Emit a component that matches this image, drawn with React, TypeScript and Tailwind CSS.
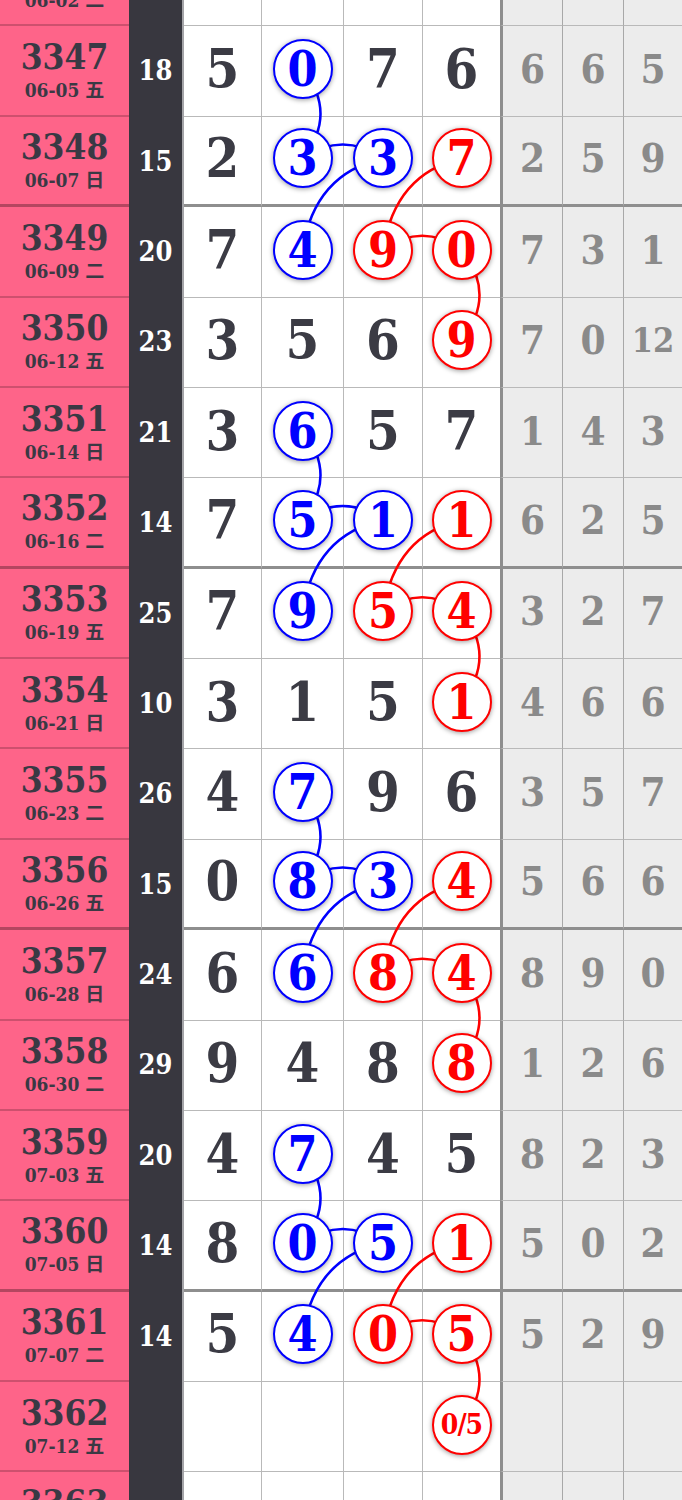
import React from "react";

const ROW_H = 90.375;

type Mark = "b" | "r" | null;

type Row = {
  no: string;
  date: string;
  sum: string;
  nums: string[];
  marks: Mark[];
  rest: string[];
};

const rows: Row[] = [
  { no: "3346", date: "06-02 二", sum: "22", nums: ["8", "3", "6", "5"], marks: [null, null, null, null], rest: ["4", "1", "8"] },
  { no: "3347", date: "06-05 五", sum: "18", nums: ["5", "0", "7", "6"], marks: [null, "b", null, null], rest: ["6", "6", "5"] },
  { no: "3348", date: "06-07 日", sum: "15", nums: ["2", "3", "3", "7"], marks: [null, "b", "b", "r"], rest: ["2", "5", "9"] },
  { no: "3349", date: "06-09 二", sum: "20", nums: ["7", "4", "9", "0"], marks: [null, "b", "r", "r"], rest: ["7", "3", "1"] },
  { no: "3350", date: "06-12 五", sum: "23", nums: ["3", "5", "6", "9"], marks: [null, null, null, "r"], rest: ["7", "0", "12"] },
  { no: "3351", date: "06-14 日", sum: "21", nums: ["3", "6", "5", "7"], marks: [null, "b", null, null], rest: ["1", "4", "3"] },
  { no: "3352", date: "06-16 二", sum: "14", nums: ["7", "5", "1", "1"], marks: [null, "b", "b", "r"], rest: ["6", "2", "5"] },
  { no: "3353", date: "06-19 五", sum: "25", nums: ["7", "9", "5", "4"], marks: [null, "b", "r", "r"], rest: ["3", "2", "7"] },
  { no: "3354", date: "06-21 日", sum: "10", nums: ["3", "1", "5", "1"], marks: [null, null, null, "r"], rest: ["4", "6", "6"] },
  { no: "3355", date: "06-23 二", sum: "26", nums: ["4", "7", "9", "6"], marks: [null, "b", null, null], rest: ["3", "5", "7"] },
  { no: "3356", date: "06-26 五", sum: "15", nums: ["0", "8", "3", "4"], marks: [null, "b", "b", "r"], rest: ["5", "6", "6"] },
  { no: "3357", date: "06-28 日", sum: "24", nums: ["6", "6", "8", "4"], marks: [null, "b", "r", "r"], rest: ["8", "9", "0"] },
  { no: "3358", date: "06-30 二", sum: "29", nums: ["9", "4", "8", "8"], marks: [null, null, null, "r"], rest: ["1", "2", "6"] },
  { no: "3359", date: "07-03 五", sum: "20", nums: ["4", "7", "4", "5"], marks: [null, "b", null, null], rest: ["8", "2", "3"] },
  { no: "3360", date: "07-05 日", sum: "14", nums: ["8", "0", "5", "1"], marks: [null, "b", "b", "r"], rest: ["5", "0", "2"] },
  { no: "3361", date: "07-07 二", sum: "14", nums: ["5", "4", "0", "5"], marks: [null, "b", "r", "r"], rest: ["5", "2", "9"] },
  { no: "3362", date: "07-12 五", sum: "", nums: ["", "", "", "0/5"], marks: [null, null, null, "r"], rest: ["", "", ""] },
  { no: "3363", date: "07-14 日", sum: "", nums: ["", "", "", ""], marks: [null, null, null, null], rest: ["", "", ""] },
];

// rows closing a block get the heavier rule
const thick = (i: number) => i % 4 === 2;

const colX = [222.5, 302.5, 383, 461.5];
const rowY = (i: number) => i * ROW_H + (ROW_H - (thick(i) ? 3 : 1) - 4) / 2;

type Pt = [number, number];
const pt = (c: number, r: number): Pt => [colX[c], rowY(r)];

// one quadratic per hop, bent the way the chart draws them
const hop = (a: Pt, b: Pt) => {
  let cx: number, cy: number;
  if (a[0] === b[0]) {
    cx = a[0] + 36;
    cy = (a[1] + b[1]) / 2;
  } else if (a[1] === b[1]) {
    cx = (a[0] + b[0]) / 2;
    cy = a[1] - 28;
  } else {
    cx = b[0] + 12;
    cy = a[1] + 15;
  }
  return `Q ${cx} ${cy} ${b[0]} ${b[1]}`;
};

const trail = (pts: Pt[]) =>
  `M ${pts[0][0]} ${pts[0][1]} ` + pts.slice(1).map((p, k) => hop(pts[k], p)).join(" ");

const starts = [1, 5, 9, 13];

const serif =
  "font-['DejaVu_Serif_Condensed','DejaVu_Serif','Noto_Sans_CJK_SC',serif] font-stretch-condensed font-bold";

const Circle = ({ v, mark }: { v: string; mark: "b" | "r" }) => (
  <div
    className={[
      "relative z-10 flex h-[60px] w-[60px] items-center justify-center rounded-full border-[2.5px] bg-white shadow-[0_1px_5px_rgba(0,0,0,0.4)]",
      mark === "b" ? "border-[#0000ff] text-[#0000ff]" : "border-[#ff0000] text-[#ff0000]",
      v.length > 1 ? "text-[28px] tracking-[-1px]" : "text-[48px]",
    ].join(" ")}
  >
    <span className="leading-none">{v}</span>
  </div>
);

export default function App() {
  return (
    <div className={`h-[1500px] w-[682px] overflow-hidden bg-white ${serif}`}>
      <div className="relative -mt-[64px]">
        {rows.map((row, i) => {
          const t = thick(i);
          const lineW = t ? "border-b-[3px] border-b-[#8e8e8e]" : "border-b border-b-[#b9b9b9]";
          return (
            <div
              key={row.no}
              className="grid h-[90.375px] grid-cols-[129px_55px_78px_82px_79px_77px_63px_61px_58px]"
            >
              <div
                className={[
                  "flex flex-col items-center justify-center bg-[#fe6489] text-[#3a3944]",
                  t ? "border-b-[3px] border-b-[rgba(60,20,30,0.38)]" : "border-b-2 border-b-[rgba(60,20,30,0.25)]",
                ].join(" ")}
              >
                <div className="text-[35px] leading-[40px]">{row.no}</div>
                <div className="text-[19px] leading-[27px]">{row.date}</div>
              </div>

              <div className="flex items-center justify-center border-r-2 border-r-[#a4a4a8] bg-[#38373f] text-[27px] text-white">
                {row.sum}
              </div>

              {row.nums.map((n, c) => {
                const m = row.marks[c];
                return (
                  <div
                    key={c}
                    className={[
                      "flex items-center justify-center bg-white pb-1 text-[54px] text-[#3b3b44]",
                      lineW,
                      c < 3 ? "border-r border-r-[#b9b9b9]" : "",
                    ].join(" ")}
                  >
                    {m && n ? <Circle v={n} mark={m} /> : <span className="leading-none">{n}</span>}
                  </div>
                );
              })}

              {row.rest.map((n, c) => (
                <div
                  key={c}
                  className={[
                    "flex items-center justify-center bg-[#ececec] pb-1 text-[#8a8a8a]",
                    n.length > 1 ? "text-[34px]" : "text-[40px]",
                    lineW,
                    c === 0 ? "border-l-[3px] border-l-[#8e8e8e]" : "",
                    c < 2 ? "border-r border-r-[#a8a8a8]" : "",
                  ].join(" ")}
                >
                  <span className="leading-none">{n}</span>
                </div>
              ))}
            </div>
          );
        })}

        <svg
          className="pointer-events-none absolute left-0 top-0"
          width={682}
          height={rows.length * ROW_H}
          fill="none"
          strokeWidth={2.5}
          strokeLinecap="round"
        >
          {starts.map((s) => (
            <g key={s}>
              <path
                d={trail([pt(1, s), pt(1, s + 1), pt(2, s + 1), pt(1, s + 2)])}
                stroke="#0000ff"
              />
              <path
                d={trail([pt(3, s + 1), pt(2, s + 2), pt(3, s + 2), pt(3, s + 3)])}
                stroke="#ff0000"
              />
            </g>
          ))}
        </svg>
      </div>
    </div>
  );
}
